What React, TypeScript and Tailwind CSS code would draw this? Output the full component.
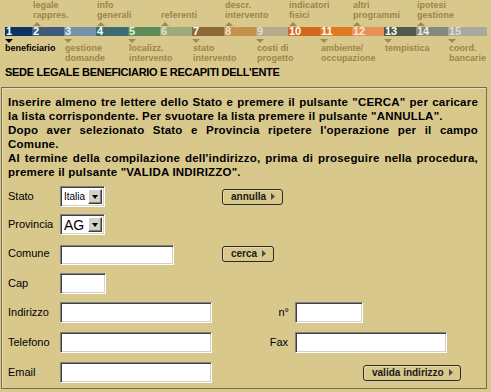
import React from "react";

// ─── Step bar data ────────────────────────────────────────────────────────────

type Step = {
  n: number;
  w: string;
  bg: string;
  num: string;
  label: string[];
  above: boolean;
  active?: boolean;
};

const STEPS: Step[] = [
  { n: 1, w: "w-[27px]", bg: "bg-[#0c3364]", num: "text-white", label: ["beneficiario"], above: false, active: true },
  { n: 2, w: "w-[32px]", bg: "bg-[#3e5b7d]", num: "text-white", label: ["legale", "rappres."], above: true },
  { n: 3, w: "w-[32px]", bg: "bg-[#7491aa]", num: "text-[#eef0ea]", label: ["gestione", "domande"], above: false },
  { n: 4, w: "w-[32px]", bg: "bg-[#3d6b72]", num: "text-white", label: ["info", "generali"], above: true },
  { n: 5, w: "w-[32px]", bg: "bg-[#5d8c5b]", num: "text-[#eef0e0]", label: ["localizz.", "intervento"], above: false },
  { n: 6, w: "w-[32px]", bg: "bg-[#9daa7a]", num: "text-[#dfe2cf]", label: ["referenti"], above: true },
  { n: 7, w: "w-[32px]", bg: "bg-[#8b6a38]", num: "text-white", label: ["stato", "intervento"], above: false },
  { n: 8, w: "w-[32px]", bg: "bg-[#c4914f]", num: "text-[#f1e3cc]", label: ["descr.", "intervento"], above: true },
  { n: 9, w: "w-[32px]", bg: "bg-[#b8aa8d]", num: "text-[#e6dfcf]", label: ["costi di", "progetto"], above: false },
  { n: 10, w: "w-[32px]", bg: "bg-[#d0691f]", num: "text-white", label: ["indicatori", "fisici"], above: true },
  { n: 11, w: "w-[32px]", bg: "bg-[#df7a24]", num: "text-white", label: ["ambiente/", "occupazione"], above: false },
  { n: 12, w: "w-[32px]", bg: "bg-[#e8905a]", num: "text-[#fbe6d8]", label: ["altri", "programmi"], above: true },
  { n: 13, w: "w-[32px]", bg: "bg-[#51594a]", num: "text-white", label: ["tempistica"], above: false },
  { n: 14, w: "w-[32px]", bg: "bg-[#838a7b]", num: "text-[#eeeeea]", label: ["ipotesi", "gestione"], above: true },
  { n: 15, w: "w-[39px]", bg: "bg-[#a9aa9b]", num: "text-[#dcdcd4]", label: ["coord.", "bancarie"], above: false },
];

function StepBar() {
  return (
    <div className="pl-[5px] text-[9px] font-bold leading-[10px]">
      {/* labels above */}
      <div className="flex h-[21px]">
        {STEPS.map((s) => (
          <div key={s.n} className={`${s.w} flex shrink-0 flex-col justify-end whitespace-nowrap pb-[1px] pl-[1px] text-[#9e8449]`}>
            {s.above && s.label.map((l) => <div key={l}>{l}</div>)}
          </div>
        ))}
      </div>
      {/* up markers */}
      <div className="flex h-[6px] pt-[1px]">
        {STEPS.map((s) => (
          <div key={s.n} className={`${s.w} shrink-0 pl-[1px]`}>
            {s.above && (
              <div className="h-0 w-0 border-x-[4px] border-b-[4px] border-x-transparent border-b-[#a08a50]" />
            )}
          </div>
        ))}
      </div>
      {/* bar */}
      <div className="flex h-[9px]">
        {STEPS.map((s) => (
          <div key={s.n} className={`${s.w} ${s.bg} flex shrink-0 items-center pl-[1px] text-[11px] leading-[9px] ${s.num}`}>
            {s.n}
          </div>
        ))}
      </div>
      {/* down markers */}
      <div className="flex h-[7px] pt-[3px]">
        {STEPS.map((s) => (
          <div key={s.n} className={`${s.w} shrink-0`}>
            {!s.above && (
              <div
                className={`h-0 w-0 border-x-[4px] border-t-[4px] border-x-transparent ${
                  s.active ? "border-t-black" : "border-t-[#a08a50]"
                }`}
              />
            )}
          </div>
        ))}
      </div>
      {/* labels below */}
      <div className="flex h-[20px]">
        {STEPS.map((s) => (
          <div
            key={s.n}
            className={`${s.w} shrink-0 whitespace-nowrap ${s.n === 1 ? "" : "pl-[1px]"} ${
              s.active ? "text-black" : "text-[#9e8449]"
            }`}
          >
            {!s.above && s.label.map((l) => <div key={l}>{l}</div>)}
          </div>
        ))}
      </div>
    </div>
  );
}

// ─── Form widgets ─────────────────────────────────────────────────────────────

const INSET =
  "border border-t-[#808080] border-l-[#808080] border-b-white border-r-white bg-white shadow-[inset_1px_1px_0_#404040,inset_-1px_-1px_0_#d4d0c8]";

function TextBox({ w, h = "h-[21px]" }: { w: string; h?: string }) {
  return <input className={`${w} ${h} ${INSET} px-[3px] text-[11px] outline-none`} />;
}

function Select({ value, size }: { value: string; size: string }) {
  return (
    <div className={`flex h-[21px] w-[45px] items-center p-[2px] ${INSET}`}>
      <span className={`flex-1 pl-[1px] leading-none text-black ${size}`}>{value}</span>
      <div className="flex h-full w-[14px] items-center justify-center border border-t-white border-l-white border-b-[#404040] border-r-[#404040] bg-[#d4d0c8] shadow-[inset_-1px_-1px_0_#808080]">
        <div className="h-0 w-0 border-x-[3.5px] border-t-[4px] border-x-transparent border-t-black" />
      </div>
    </div>
  );
}

function Btn({ children }: { children: React.ReactNode }) {
  return (
    <button className="flex h-[16px] items-center gap-[5px] rounded-[3px] border border-[#2b2b2b] pl-[8px] pr-[7px] text-[10px] font-bold leading-none text-[#1a1a1a] shadow-[inset_1px_1px_0_#e9dcaa]">
      {children}
      <svg width="4" height="7" viewBox="0 0 4 7">
        <path d="M0 0L4 3.5L0 7Z" fill="#4a4a4a" />
      </svg>
    </button>
  );
}

function Label({ children }: { children: React.ReactNode }) {
  return <div className="w-[52px] shrink-0 text-[11px] text-black">{children}</div>;
}

// ─── Page ─────────────────────────────────────────────────────────────────────

export default function App() {
  return (
    <div className="h-[392px] w-[491px] overflow-hidden bg-[#d8c88c] font-['Liberation_Sans',Arial,sans-serif]">
      <StepBar />

      <h2 className="mt-[3px] pl-[5px] text-[11px] font-bold leading-[13px] tracking-[-0.3px] text-black">
        SEDE LEGALE BENEFICIARIO E RECAPITI DELL'ENTE
      </h2>

      <div className="ml-[1px] mt-[8px] w-[486px] border border-[#756c55] pb-[5px] shadow-[inset_1px_1px_0_#eadfb0]">
        {/* instructions */}
        <div className="pl-[6px] pr-[8px] pt-[7px] text-[11.5px] font-bold leading-[14px] tracking-[0.2px] text-black">
          <div className="text-justify [text-align-last:justify]">
            Inserire almeno tre lettere dello Stato e premere il pulsante "CERCA" per caricare
          </div>
          <div>la lista corrispondente. Per svuotare la lista premere il pulsante "ANNULLA".</div>
          <div className="text-justify [text-align-last:justify]">
            Dopo aver selezionato Stato e Provincia ripetere l'operazione per il campo
          </div>
          <div>Comune.</div>
          <div className="text-justify [text-align-last:justify]">
            Al termine della compilazione dell'indirizzo, prima di proseguire nella procedura,
          </div>
          <div>premere il pulsante "VALIDA INDIRIZZO".</div>
        </div>

        {/* form */}
        <div className="pl-[6px]">
          <div className="mt-[7px] flex h-[21px] items-center">
            <Label>Stato</Label>
            <div className="w-[151px] shrink-0">
              <Select value="Italia" size="text-[10px]" />
            </div>
            <div className="pl-[11px]">
              <Btn>annulla</Btn>
            </div>
          </div>

          <div className="mt-[7px] flex h-[21px] items-center">
            <Label>Provincia</Label>
            <Select value="AG" size="text-[14px]" />
          </div>

          <div className="mt-[8px] flex h-[21px] items-center">
            <Label>Comune</Label>
            <div className="w-[151px] shrink-0">
              <TextBox w="w-[114px]" h="h-[20px]" />
            </div>
            <div className="pl-[11px]">
              <Btn>cerca</Btn>
            </div>
          </div>

          <div className="mt-[9px] flex h-[21px] items-center">
            <Label>Cap</Label>
            <TextBox w="w-[46px]" />
          </div>

          <div className="mt-[8px] flex h-[21px] items-center">
            <Label>Indirizzo</Label>
            <TextBox w="w-[152px]" />
            <div className="w-[83px] shrink-0 pr-[6px] text-right text-[11px] text-black">n°</div>
            <TextBox w="w-[68px]" />
          </div>

          <div className="mt-[9px] flex h-[21px] items-center">
            <Label>Telefono</Label>
            <TextBox w="w-[152px]" />
            <div className="w-[83px] shrink-0 pr-[7px] text-right text-[11px] text-black">Fax</div>
            <TextBox w="w-[152px]" />
          </div>

          <div className="mt-[9px] flex h-[21px] items-center">
            <Label>Email</Label>
            <TextBox w="w-[152px]" />
            <div className="ml-[151px]">
              <Btn>valida indirizzo</Btn>
            </div>
          </div>
        </div>
      </div>
    </div>
  );
}
